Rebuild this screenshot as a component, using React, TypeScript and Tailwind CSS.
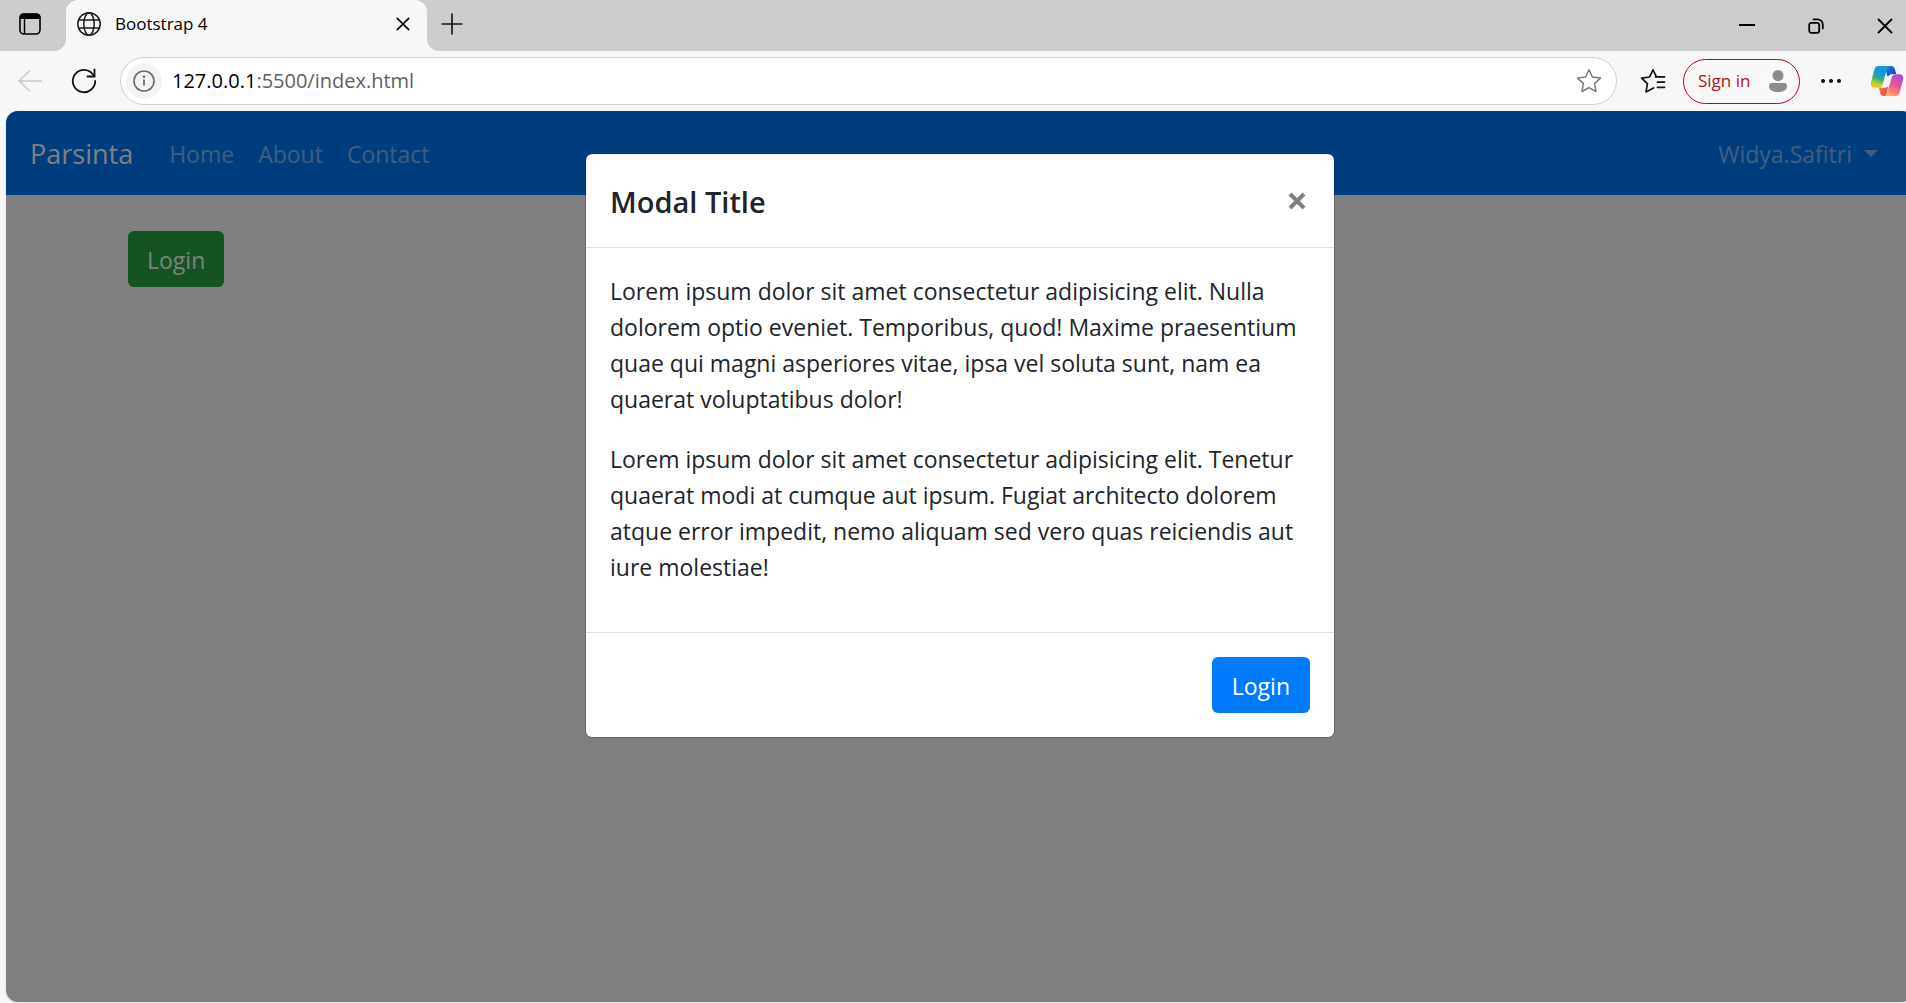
import type { ReactNode } from "react";

function TabActionsIcon() {
  return (
    <svg width="22" height="22" viewBox="0 0 22 22" fill="none" aria-hidden="true">
      <rect x="1" y="1" width="20" height="20" rx="4" stroke="#000" strokeWidth="1.6" />
      <path d="M.5 6V4.500a4 4 0 0 1 4-4h13a4 4 0 0 1 4 4V6z" fill="#000" />
      <path d="M5.500 6v15" stroke="#000" strokeWidth="1.5" />
    </svg>
  );
}

function GlobeIcon() {
  return (
    <svg width="24" height="24" viewBox="0 0 24 24" fill="none" stroke="#1b1b1b" strokeWidth="1.500" aria-hidden="true">
      <circle cx="12" cy="12" r="11.200" />
      <ellipse cx="12" cy="12" rx="5.200" ry="11.200" />
      <path d="M1.800 8h20.400M1.800 16h20.400" />
    </svg>
  );
}

function CrossIcon({ size }: { size: number }) {
  return (
    <svg width={size} height={size} viewBox="0 0 16 16" fill="none" stroke="#000" strokeWidth="1.900" strokeLinecap="round" aria-hidden="true">
      <path d="m1.500 1.500 13 13M14.500 1.500l-13 13" />
    </svg>
  );
}

function PlusIcon() {
  return (
    <svg width="22" height="22" viewBox="0 0 22 22" stroke="#111" strokeWidth="1.600" aria-hidden="true">
      <path d="M11 .5v21M.5 11h21" />
    </svg>
  );
}

function RestoreIcon() {
  return (
    <svg width="16" height="16" viewBox="0 0 16 16" fill="none" stroke="#000" strokeWidth="1.800" strokeLinecap="round" aria-hidden="true">
      <rect x="1.200" y="4.800" width="10" height="10" rx="2" />
      <path d="M5.500 1.400h4.200a5.100 5.100 0 0 1 5.100 5.100v3.900" />
    </svg>
  );
}

function BackIcon() {
  return (
    <svg width="24" height="22" viewBox="0 0 24 22" fill="none" stroke="#c9c9c9" strokeWidth="1.600" strokeLinecap="round" strokeLinejoin="round" aria-hidden="true">
      <path d="M23.200 11H1M11.500 1 1 11l10.500 10" />
    </svg>
  );
}

function ReloadIcon() {
  return (
    <svg width="26" height="26" viewBox="0 0 26 26" fill="none" stroke="#111" strokeWidth="1.800" strokeLinecap="round" strokeLinejoin="round" aria-hidden="true">
      <path d="M24.200 13A11.200 11.200 0 1 1 20 4.300L23.500 8" />
      <path d="M23.500 1.500V8.500H16.500" />
    </svg>
  );
}

function InfoIcon() {
  return (
    <svg width="22" height="22" viewBox="0 0 22 22" fill="none" stroke="#6b6b6b" strokeWidth="1.600" aria-hidden="true">
      <circle cx="11" cy="11" r="10" />
      <path d="M11 9.500v6" strokeWidth="1.800" />
      <circle cx="11" cy="6.800" r="1.200" fill="#6b6b6b" stroke="none" />
    </svg>
  );
}

function StarIcon() {
  return (
    <svg width="26" height="26" viewBox="0 0 26 26" fill="none" stroke="#7a7a7a" strokeWidth="1.500" strokeLinejoin="round" aria-hidden="true">
      <path d="M13 1.800 16.400 9l8 1.100-5.800 5.500 1.400 7.900-7-3.800-7 3.800 1.400-7.900L1.600 10.100l8-1.100z" />
    </svg>
  );
}

function FavoritesIcon() {
  return (
    <svg width="26" height="26" viewBox="0 0 26 26" fill="none" stroke="#111" strokeWidth="1.700" strokeLinejoin="round" strokeLinecap="round" aria-hidden="true">
      <path d="M13.500 19.900 6 23.900l1.400-8.300L1.600 10.100l8-1.100L13 1.800l3.200 6.600" />
      <path d="M15.500 8.900h9M17.500 14.100h7M17.500 19.300h7" />
    </svg>
  );
}

function CopilotIcon() {
  return (
    <svg width="34" height="32" viewBox="0 0 34 32" aria-hidden="true">
      <defs>
        <linearGradient id="wing-left" x1="0.6" y1="0" x2="0.300" y2="1">
          <stop offset="0" stopColor="#1496e8" />
          <stop offset="0.350" stopColor="#1199d8" />
          <stop offset="0.600" stopColor="#35b07a" />
          <stop offset="0.850" stopColor="#d2cc20" />
          <stop offset="1" stopColor="#f5c50d" />
        </linearGradient>
        <linearGradient id="fold-top" x1="0" y1="0" x2="1" y2="1">
          <stop offset="0" stopColor="#1d7fe6" />
          <stop offset="1" stopColor="#1e33b8" />
        </linearGradient>
        <linearGradient id="wing-right" x1="0.800" y1="0" x2="0.400" y2="1">
          <stop offset="0" stopColor="#a04cf0" />
          <stop offset="0.450" stopColor="#e550a0" />
          <stop offset="0.750" stopColor="#f9737c" />
          <stop offset="1" stopColor="#fdab62" />
        </linearGradient>
        <linearGradient id="fold-bottom" x1="0" y1="0" x2="1" y2="1">
          <stop offset="0" stopColor="#fb9a38" />
          <stop offset="1" stopColor="#e6323c" />
        </linearGradient>
      </defs>
      <path d="M15 1h6c2.500 0 3.400 1.500 4 3.500l1.300 4.800h-3.800c-2.600 0-4 1.300-4.800 3.900z" fill="url(#fold-top)" />
      <path d="M8.800 22.500h5.500c2 0 3.200-1 4-3.400l2-5-4.500 17h-2c-2.200 0-3.100-1.500-3.700-3.500z" fill="url(#fold-bottom)" />
      <path d="M8 1h12.500c-2 0-3 1.600-3.800 4.300l-4 13.700c-.8 2.600-2 3.700-4.600 3.700H4.800C1.500 22.700.2 20 1 17L4.300 5C5 2.500 6 1 8 1z" fill="url(#wing-left)" />
      <path d="M26 31H13.600c2 0 3-1.600 3.800-4.300l4-13.500c.8-2.600 2-3.900 4.600-3.900h3.200c3.300 0 4.600 2.700 3.800 5.700l-3.300 12C29 29.500 28 31 26 31z" fill="url(#wing-right)" />
      <path d="M19.400 10.500c1.200-1 2.400-1.200 4-1.200-1.200.8-1.700 2-2.200 3.900l-2 6.800c-.7 2-2 2.700-4.800 2.700-1 0-2.200.1-3 0 .7-.7 1.100-1.700 1.600-3.200l1.800-5.500c.8-2.200 2.200-3 4.600-3.500z" fill="#f7f7f7" />
    </svg>
  );
}

function ToolButton({ label, className, children }: { label: string; className: string; children: ReactNode }) {
  return (
    <button type="button" aria-label={label} className={`flex shrink-0 items-center justify-center ${className}`}>
      {children}
    </button>
  );
}

function TabStrip() {
  return (
    <div className="flex h-[51px] items-stretch bg-[#cdcdcd]">
      <div className="flex w-[66px] bg-[#f7f7f7]">
        <ToolButton label="Tab actions" className="w-full rounded-br-xl bg-[#cdcdcd] pr-1.5 pb-1">
          <TabActionsIcon />
        </ToolButton>
      </div>
      <div className="bg-[#cdcdcd]">
        <div className="flex h-full w-[361px] items-center rounded-t-xl bg-[#f7f7f7] pr-[17px] pb-[3px] pl-[11px]">
          <GlobeIcon />
          <span className="ml-3.5 flex-1 font-['Open_Sans','Noto_Sans',sans-serif] text-[17px] text-black">Bootstrap 4</span>
          <ToolButton label="Close tab" className="">
            <CrossIcon size={14} />
          </ToolButton>
        </div>
      </div>
      <div className="flex flex-1 bg-[#f7f7f7]">
        <div className="flex flex-1 items-center rounded-bl-xl bg-[#cdcdcd] pl-[14px]">
          <ToolButton label="New tab" className="mb-1">
            <PlusIcon />
          </ToolButton>
          <div className="ml-auto flex items-center pr-[13px]">
            <ToolButton label="Minimize" className="h-4 w-4 pb-0.5">
              <span className="h-0.5 w-4 bg-black" />
            </ToolButton>
            <ToolButton label="Restore" className="ml-[53px]">
              <RestoreIcon />
            </ToolButton>
            <ToolButton label="Close window" className="ml-[53px]">
              <CrossIcon size={16} />
            </ToolButton>
          </div>
        </div>
      </div>
    </div>
  );
}

function AddressBar() {
  return (
    <div className="flex h-[60px] items-center bg-[#f7f7f7] pl-[18px]">
      <ToolButton label="Back" className="">
        <BackIcon />
      </ToolButton>
      <ToolButton label="Reload" className="ml-[29px]">
        <ReloadIcon />
      </ToolButton>
      <div className="ml-[23px] flex h-12 flex-1 items-center rounded-full border border-[#cfcfcf] bg-white pr-[14px] pl-[5px]">
        <ToolButton label="Site information" className="size-9 rounded-full bg-[#f3f3f3]">
          <InfoIcon />
        </ToolButton>
        <a href="#address" className="ml-2.5 flex-1 font-['Open_Sans','Noto_Sans',sans-serif] text-xl text-[#5f5f5f]">
          <span className="text-black">127.0.0.1</span>:5500/index.html
        </a>
        <ToolButton label="Add to favorites" className="">
          <StarIcon />
        </ToolButton>
      </div>
      <ToolButton label="Favorites" className="ml-[23px]">
        <FavoritesIcon />
      </ToolButton>
      <button type="button" className="ml-[17px] flex h-[45px] w-[117px] shrink-0 items-center justify-between rounded-full border border-[#a80f14] pr-1 pl-3.5 font-['Open_Sans','Noto_Sans',sans-serif] text-[17px] whitespace-nowrap text-[#b3141b]">
        Sign in
        <span className="flex size-[34px] items-center justify-center rounded-full bg-[#f9f9f9]">
          <svg width="18" height="22" viewBox="0 0 18 22" fill="#8c8c8c" aria-hidden="true">
            <circle cx="9" cy="5.500" r="5.500" />
            <path d="M3 13h12a3 3 0 0 1 3 3c0 4-4 6-9 6s-9-2-9-6a3 3 0 0 1 3-3z" />
          </svg>
        </span>
      </button>
      <ToolButton label="Settings and more" className="ml-5">
        <svg width="22" height="6" viewBox="0 0 22 6" aria-hidden="true">
          <circle cx="3" cy="3" r="2" />
          <circle cx="11" cy="3" r="2" />
          <circle cx="19" cy="3" r="2" />
        </svg>
      </ToolButton>
      <ToolButton label="Copilot" className="mr-[2px] ml-[28px]">
        <CopilotIcon />
      </ToolButton>
    </div>
  );
}

function Navbar() {
  return (
    <nav className="flex h-[84px] items-center bg-[#007bff] px-6 pt-0.5 text-[23px] text-white/50">
      <a href="#brand" className="mr-6 text-[27px] text-white">
        Parsinta
      </a>
      <a href="#home" className="px-3">
        Home
      </a>
      <a href="#about" className="px-3">
        About
      </a>
      <a href="#contact" className="px-3">
        Contact
      </a>
      <button type="button" className="ml-auto flex items-center gap-3 px-3">
        Widya.Safitri
        <span className="mb-0.5 border-x-[7px] border-t-[7px] border-x-transparent" />
      </button>
    </nav>
  );
}

const paragraphs = [
  "Lorem ipsum dolor sit amet consectetur adipisicing elit. Nulla dolorem optio eveniet. Temporibus, quod! Maxime praesentium quae qui magni asperiores vitae, ipsa vel soluta sunt, nam ea quaerat voluptatibus dolor!",
  "Lorem ipsum dolor sit amet consectetur adipisicing elit. Tenetur quaerat modi at cumque aut ipsum. Fugiat architecto dolorem atque error impedit, nemo aliquam sed vero quas reiciendis aut iure molestiae!",
];

function Modal() {
  return (
    <div role="dialog" aria-modal="true" aria-labelledby="modal-title" className="w-full max-w-[748px] rounded-md bg-white text-[#212529] outline outline-black/20">
      <div className="flex items-start justify-between border-b border-[#dee2e6] px-6 pt-[25px] pb-[23px]">
        <h5 id="modal-title" className="text-[29px] leading-[45px] font-semibold">
          Modal Title
        </h5>
        <button type="button" aria-label="Close" className="mt-[13px] mr-1">
          <svg width="18" height="18" viewBox="0 0 18 18" stroke="#7f7f7f" strokeWidth="4" aria-hidden="true">
            <path d="m2 2 14 14M16 2 2 16" />
          </svg>
        </button>
      </div>
      <div className="px-6 pt-[25px] pb-[23px]">
        {paragraphs.map((text) => (
          <p key={text} className="mb-6 text-[23px] leading-9">
            {text}
          </p>
        ))}
      </div>
      <div className="flex justify-end border-t border-[#dee2e6] p-6">
        <button type="button" className="h-14 rounded-md bg-[#007bff] px-5 pt-0.5 text-[23px] text-white">
          Login
        </button>
      </div>
    </div>
  );
}

export default function App() {
  return (
    <div className="flex min-h-screen flex-col overflow-hidden bg-[#f7f7f7]">
      <TabStrip />
      <AddressBar />
      <main className="relative -mr-2 mb-px ml-1.5 flex-1 overflow-hidden rounded-xl bg-white font-['Open_Sans','Noto_Sans',sans-serif] shadow">
        <Navbar />
        <div className="mx-auto mt-9 max-w-[1710px] px-[23px]">
          <button type="button" className="h-14 rounded-md bg-[#28a745] px-[19px] pt-0.5 text-[23px] text-white">
            Login
          </button>
        </div>
        <div className="absolute inset-0 flex items-start justify-center bg-black/50 pt-[43px]">
          <Modal />
        </div>
      </main>
    </div>
  );
}
